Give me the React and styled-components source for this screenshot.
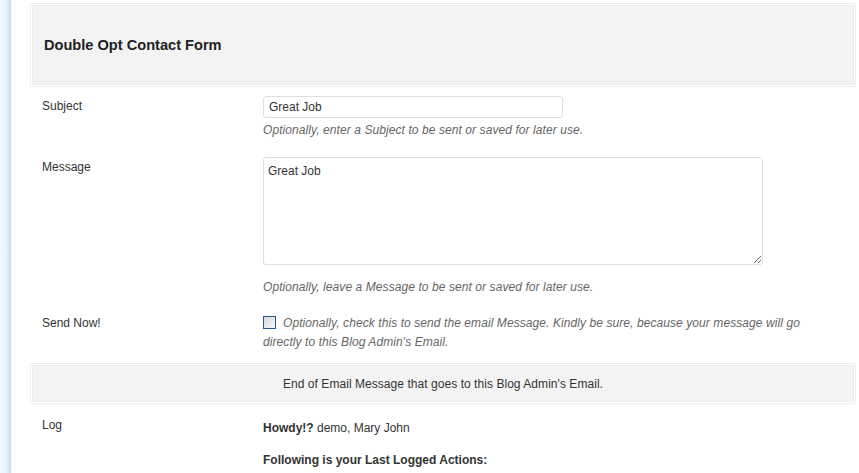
import React from "react";
import styled, { createGlobalStyle } from "styled-components";

const Global = createGlobalStyle`
  html, body { margin: 0; padding: 0; background: #fff; }
  body {
    font-family: "Liberation Sans", Arial, sans-serif;
    font-size: 12px;
    color: #333;
  }
`;

const Page = styled.div`
  display: flex;
  min-height: 473px;
  overflow: hidden;
`;

const Strip = styled.div`
  width: 11px;
  flex: 0 0 11px;
  background: linear-gradient(to right, #f1f8fe 0%, #e9f2fa 55%, #d6e6f1 82%, #c6d9e6 100%);
`;

const Main = styled.div`
  flex: 1;
  padding: 3px 3px 0 19px;
`;

const Panel = styled.div`
  border: 1px solid #efefef;
  padding: 1px;
  background: #fff;
  margin-top: ${(p) => p.$mt || 0}px;
`;

const PanelInner = styled.div`
  background: #f3f3f3;
  border: 1px solid #ececec;
  height: ${(p) => p.$h}px;
  display: flex;
  align-items: center;
  justify-content: ${(p) => (p.$center ? "center" : "flex-start")};
  padding-left: ${(p) => (p.$center ? 0 : 11)}px;
  box-sizing: border-box;
`;

const Title = styled.h2`
  margin: 0;
  font-size: 14.6px;
  font-weight: bold;
  color: #222;
`;

const Row = styled.div`
  display: grid;
  grid-template-columns: 233px 1fr;
  padding-top: ${(p) => p.$pt}px;
`;

const Label = styled.div`
  padding-left: 12px;
  padding-top: ${(p) => p.$pt || 0}px;
  line-height: ${(p) => p.$lh || 17}px;
  color: #333;
`;

const Field = styled.div`
  padding-right: 12px;
`;

const TextInput = styled.input`
  display: block;
  box-sizing: border-box;
  width: 300px;
  height: 22px;
  border: 1px solid #dfdfdf;
  border-radius: 3px;
  padding: 0 5px;
  font-family: "Liberation Sans", Arial, sans-serif;
  font-size: 12px;
  color: #333;
  outline: none;
`;

const TextArea = styled.textarea`
  display: block;
  box-sizing: border-box;
  width: 500px;
  height: 108px;
  border: 1px solid #dfdfdf;
  border-radius: 3px;
  padding: 5px 4px;
  font-family: "Liberation Sans", Arial, sans-serif;
  font-size: 12px;
  line-height: 16px;
  color: #333;
  outline: none;
  margin: 0;
`;

const Desc = styled.p`
  margin: ${(p) => p.$mt}px 0 0;
  font-style: italic;
  color: #666;
  letter-spacing: 0.08px;
  line-height: ${(p) => p.$lh || 16}px;
  max-width: ${(p) => (p.$maxw ? `${p.$maxw}px` : "none")};
`;

const Check = styled.span`
  display: inline-block;
  box-sizing: border-box;
  width: 13px;
  height: 13px;
  border: 1px solid #245a91;
  background: linear-gradient(to bottom right, #d8d8d8, #f8f8f8);
  vertical-align: -2px;
  margin-right: 7px;
`;

const EndText = styled.span`
  color: #333;
  letter-spacing: 0.05px;
`;

const Line = styled.p`
  margin: ${(p) => p.$mt}px 0 0;
  line-height: 16px;
  color: #333;
  font-weight: ${(p) => (p.$bold ? "bold" : "normal")};
`;

const Strong = styled.strong`
  font-weight: bold;
`;

export default function App() {
  return (
    <>
      <Global />
      <Page>
        <Strip />
        <Main>
          <Panel>
            <PanelInner $h={80}>
              <Title>Double Opt Contact Form</Title>
            </PanelInner>
          </Panel>

          <Row $pt={9}>
            <Label $pt={2}>Subject</Label>
            <Field>
              <TextInput defaultValue="Great Job" />
              <Desc $mt={4}>Optionally, enter a Subject to be sent or saved for later use.</Desc>
            </Field>
          </Row>

          <Row $pt={19}>
            <Label $pt={2}>Message</Label>
            <Field>
              <TextArea defaultValue="Great Job" />
              <Desc $mt={14}>Optionally, leave a Message to be sent or saved for later use.</Desc>
            </Field>
          </Row>

          <Row $pt={19}>
            <Label $lh={19}>Send Now!</Label>
            <Field>
              <Desc $mt={0} $lh={19} $maxw={555}>
                <Check />
                Optionally, check this to send the email Message. Kindly be sure, because your message will go directly to this Blog Admin's Email.
              </Desc>
            </Field>
          </Row>

          <Panel $mt={11}>
            <PanelInner $h={37} $center>
              <EndText>End of Email Message that goes to this Blog Admin's Email.</EndText>
            </PanelInner>
          </Panel>

          <Row $pt={11}>
            <Label $pt={2}>Log</Label>
            <Field>
              <Line $mt={5}>
                <Strong>Howdy!?</Strong> demo, Mary John
              </Line>
              <Line $mt={16} $bold>Following is your Last Logged Actions:</Line>
            </Field>
          </Row>
        </Main>
      </Page>
    </>
  );
}
